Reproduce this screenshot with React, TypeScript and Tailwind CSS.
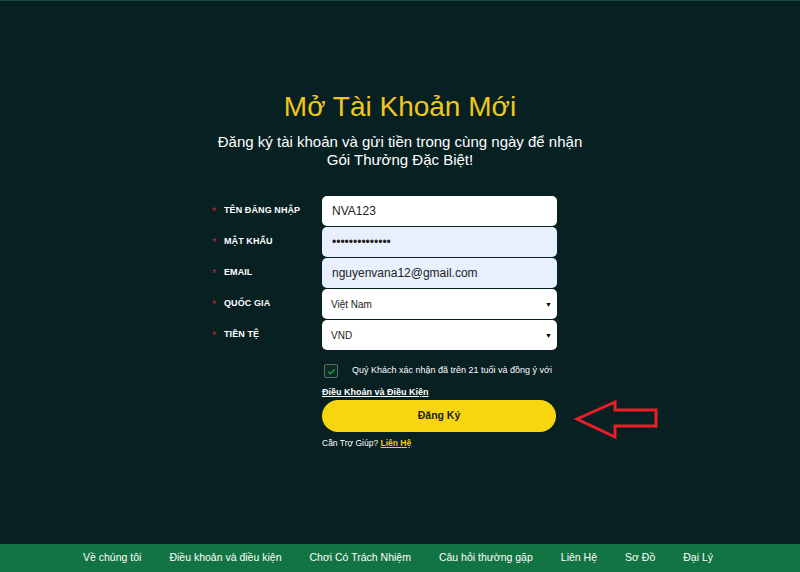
import { useState } from "react";

const font = { fontFamily: '"Liberation Sans", Arial, sans-serif' };

function Label({ text }: { text: string }) {
  return (
    <div className="flex h-[30px] items-center pl-[2px]">
      <span className="w-[12px] text-[11px] leading-none text-[#c2262e]">*</span>
      <span className="text-[9px] font-bold uppercase tracking-[0.01em] text-white">{text}</span>
    </div>
  );
}

function Caret() {
  return <span className="pointer-events-none absolute right-[5px] top-[12px] text-[7px] leading-none text-black">▼</span>;
}

const footerLinks = [
  "Về chúng tôi",
  "Điều khoản và điều kiện",
  "Chơi Có Trách Nhiệm",
  "Câu hỏi thường gặp",
  "Liên Hệ",
  "Sơ Đồ",
  "Đại Lý",
];

export default function App() {
  const [agree, setAgree] = useState(true);

  return (
    <div className="flex h-screen flex-col overflow-hidden bg-[#072022]" style={font}>
      <main className="flex-1 border-t border-[#1d4a3a] pt-[88px]">
        <h1 className="text-center text-[28px] leading-[36px] text-[#f2c71c]">Mở Tài Khoản Mới</h1>
        <p className="mx-auto mt-[8px] w-[375px] text-center text-[15px] leading-[18px] text-white">
          Đăng ký tài khoản và gửi tiền trong cùng ngày để nhận Gói Thưởng Đặc Biệt!
        </p>

        <form className="mx-auto mt-[27px] grid w-[380px] grid-cols-[112px_235px] gap-y-[1px]">
          <Label text="Tên đăng nhập" />
          <input
            defaultValue="NVA123"
            className="h-[30px] rounded-[5px] bg-white px-[10px] text-[12px] text-[#222] outline-none"
          />

          <Label text="Mật khẩu" />
          <input
            type="password"
            defaultValue="nguyenvana1234"
            className="h-[30px] rounded-[5px] bg-[#e8f0fe] px-[10px] text-[12px] text-[#222] outline-none"
          />

          <Label text="Email" />
          <input
            defaultValue="nguyenvana12@gmail.com"
            className="h-[30px] rounded-[5px] bg-[#e8f0fe] px-[10px] text-[12px] text-[#222] outline-none"
          />

          <Label text="Quốc gia" />
          <div className="relative">
            <select className="h-[30px] w-full appearance-none rounded-[5px] bg-white px-[9px] text-[10px] text-[#222] outline-none">
              <option>Việt Nam</option>
            </select>
            <Caret />
          </div>

          <Label text="Tiền tệ" />
          <div className="relative">
            <select className="h-[30px] w-full appearance-none rounded-[5px] bg-white px-[9px] text-[10px] text-[#222] outline-none">
              <option>VND</option>
            </select>
            <Caret />
          </div>

          <div />
          <div className="pt-[13px]">
            <label className="flex items-center">
              <button
                type="button"
                onClick={() => setAgree(!agree)}
                className="ml-[2px] flex h-[14px] w-[14px] shrink-0 items-center justify-center rounded-[2px] border border-[#5b6e66] bg-[#0c2a22]"
              >
                {agree && (
                  <svg viewBox="0 0 10 10" className="h-[9px] w-[9px]">
                    <path d="M1.5 5.2 L4 7.5 L8.5 2.5" fill="none" stroke="#1f8a3c" strokeWidth="2" />
                  </svg>
                )}
              </button>
              <span className="ml-[14px] whitespace-nowrap text-[9px] text-white">
                Quý Khách xác nhận đã trên 21 tuổi và đồng ý với
              </span>
            </label>
            <a className="mt-[8px] block text-[9px] font-bold leading-[12px] text-white underline">
              Điều Khoản và Điều Kiện
            </a>

            <div className="relative mt-[2px]">
              <button
                type="button"
                className="h-[32px] w-[234px] rounded-full bg-[#f7d60f] text-[10.5px] font-bold text-[#222]"
              >
                Đăng Ký
              </button>
              <svg
                viewBox="0 0 86 41"
                className="absolute left-[251px] top-[-1px] h-[41px] w-[86px]"
              >
                <path
                  d="M4 20 L42 3 L42 11 L83 11 L83 27 L42 27 L42 38 Z"
                  fill="none"
                  stroke="#e8202a"
                  strokeWidth="3"
                />
              </svg>
            </div>

            <p className="mt-[5px] text-[8.5px] text-white">
              Cần Trợ Giúp? <a className="font-bold text-[#f2c71c] underline">Liên Hệ</a>
            </p>
          </div>
        </form>
      </main>

      <footer className="flex h-[28px] shrink-0 items-center justify-center gap-[28px] bg-[#137443] pr-[4px] text-[10.5px] text-white">
        {footerLinks.map((l) => (
          <a key={l}>{l}</a>
        ))}
      </footer>
    </div>
  );
}
